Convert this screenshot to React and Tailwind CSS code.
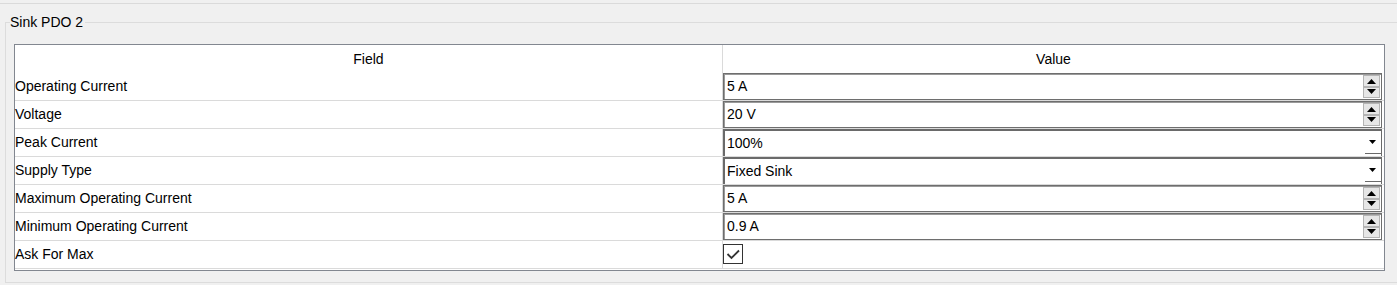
import React from 'react';

const rows = [
  { label: 'Operating Current', type: 'spin', value: '5 A' },
  { label: 'Voltage', type: 'spin', value: '20 V' },
  { label: 'Peak Current', type: 'combo', value: '100%' },
  { label: 'Supply Type', type: 'combo', value: 'Fixed Sink' },
  { label: 'Maximum Operating Current', type: 'spin', value: '5 A' },
  { label: 'Minimum Operating Current', type: 'spin', value: '0.9 A' },
  { label: 'Ask For Max', type: 'check', value: true },
];

const SpinBox = ({ value }) => (
  <div className="flex h-[27px] w-[659px] border border-[#6e6e6e] bg-white shadow-[inset_1px_1px_0_#9a9a9a]">
    <div className="flex flex-1 items-center pl-[3px]">{value}</div>
    <div className="flex w-[18px] flex-col py-[1px] pr-[1px]">
      <div className="flex h-[12px] items-center justify-center border border-[#b4b4b4] bg-[#e6e6e6]">
        <svg width="11" height="6" viewBox="0 0 11 6"><polygon points="1,6 10,6 5.5,1" fill="#000" /></svg>
      </div>
      <div className="flex h-[12px] items-center justify-center border border-[#b4b4b4] bg-[#e6e6e6]">
        <svg width="11" height="6" viewBox="0 0 11 6"><polygon points="1,0 10,0 5.5,5" fill="#000" /></svg>
      </div>
    </div>
  </div>
);

const ComboBox = ({ value }) => (
  <div className="flex h-[27px] w-[659px] border-l-2 border-t-2 border-r border-[#6a6a6a] bg-white">
    <div className="flex flex-1 items-center pl-[2px]">{value}</div>
    <div className="flex w-[16px] items-center justify-center border-b border-[#6a6a6a] mb-[2px]">
      <svg width="8" height="4" viewBox="0 0 8 4"><polygon points="0,0 7,0 3.5,4" fill="#000" /></svg>
    </div>
  </div>
);

const CheckBox = ({ checked }) => (
  <div className="mt-[3px] flex h-[20px] w-[20px] items-center justify-center border border-[#333] bg-white">
    {checked && (
      <svg width="16" height="16" viewBox="0 0 16 16">
        <path d="M2.5 8 L6.5 12 L14 4.5" fill="none" stroke="#333" strokeWidth="1.8" />
      </svg>
    )}
  </div>
);

export default function App() {
  return (
    <div className="h-[285px] w-[1397px] overflow-hidden bg-[#f0f0f0] font-['Liberation_Sans',Arial,sans-serif] text-[14px] text-black">
      <div className="h-[4px] border-b border-[#dadada]" />
      <fieldset className="ml-[5px] mt-[10px] h-[269px] w-[1400px] border border-[#dcdcdc]">
        <legend className="ml-[4px] pr-[2px] leading-[16px]">Sink PDO 2</legend>

        {/* property grid */}
        <div className="ml-[8px] mt-[14px] w-[1371px] border border-[#828790] bg-white pb-[1px]">
          <div className="flex h-[28px]">
            <div className="flex w-[707px] items-center justify-center">Field</div>
            <div className="w-[1px] bg-[#dadada]" />
            <div className="flex flex-1 items-center justify-center">Value</div>
          </div>
          {rows.map((row) => (
            <div key={row.label} className="flex h-[28px] border-b border-[#dadada]">
              <div className="flex w-[707px] items-center">{row.label}</div>
              <div className="w-[1px] bg-[#dadada]" />
              <div className="flex-1">
                {row.type === 'spin' && <SpinBox value={row.value} />}
                {row.type === 'combo' && <ComboBox value={row.value} />}
                {row.type === 'check' && <CheckBox checked={row.value} />}
              </div>
            </div>
          ))}
        </div>
      </fieldset>
    </div>
  );
}
